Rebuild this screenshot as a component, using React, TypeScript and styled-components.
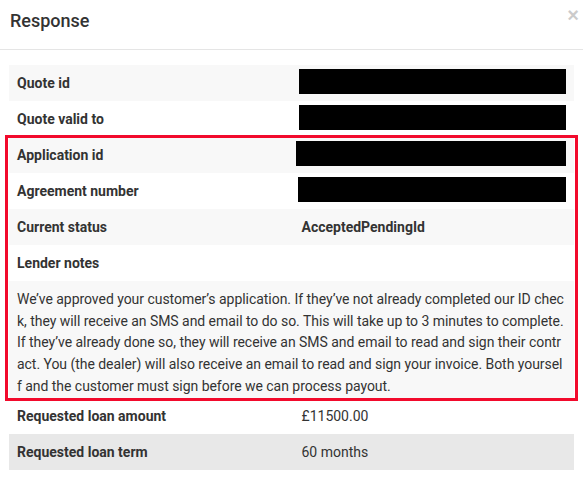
import React from 'react';
import styled, { createGlobalStyle } from 'styled-components';

const GlobalStyle = createGlobalStyle`
  html, body {
    margin: 0;
    padding: 0;
    background: #ffffff;
  }
  body {
    font-family: Roboto, "Liberation Sans", Arial, sans-serif;
    color: #333333;
    font-size: 14px;
  }
  * {
    box-sizing: border-box;
  }
`;

const Modal = styled.div`
  width: 583px;
  background: #ffffff;
`;

const Header = styled.div`
  display: flex;
  justify-content: space-between;
  align-items: flex-start;
  padding: 8px 4px 15px 10px;
  border-bottom: 1px solid #e5e5e5;
`;

const Title = styled.h4`
  margin: 0;
  font-size: 18px;
  line-height: 26px;
  font-weight: 500;
  color: #333333;
`;

const CloseButton = styled.button`
  border: 0;
  background: transparent;
  padding: 0;
  margin-top: -3px;
  font-family: "Liberation Sans", Arial, sans-serif;
  font-size: 20px;
  line-height: 1;
  font-weight: bold;
  color: #000000;
  opacity: 0.2;
  cursor: pointer;
`;

const Body = styled.div`
  padding: 15px 9px;
`;

const Table = styled.div`
  display: flex;
  flex-direction: column;
`;

const Row = styled.div<{ $bg?: string }>`
  display: grid;
  grid-template-columns: 1fr 1fr;
  background: ${({ $bg }) => $bg || '#ffffff'};
`;

const Label = styled.div`
  padding: 8px;
  font-weight: 700;
  line-height: 20px;
  color: #333333;
`;

const Value = styled.div<{ $bold?: boolean }>`
  padding: 8px 8px 8px 10px;
  line-height: 20px;
  font-weight: ${({ $bold }) => ($bold ? 700 : 400)};
  color: #333333;
`;

const Redacted = styled.span<{ $width: number; $shift?: number }>`
  display: block;
  height: 25px;
  width: ${({ $width }) => $width}px;
  margin: -4px 0 -1px ${({ $shift }) => $shift ?? -3}px;
  background: #000000;
`;

const Notes = styled.div`
  grid-column: 1 / span 2;
  padding: 8px 7px 0 8px;
  line-height: 21.7px;
  letter-spacing: -0.04px;
  word-break: break-all;
  color: #333333;
`;

const Highlight = styled.div`
  position: relative;

  &::after {
    content: "";
    position: absolute;
    top: -2px;
    bottom: -3px;
    left: -4px;
    right: -4px;
    border: 3px solid #f20a2c;
    pointer-events: none;
  }
`;

const STRIPE = '#f8f8f8';
const HOVER = '#e8e8e8';

const App = () => {
  return (
    <>
      <GlobalStyle />
      <Modal>
        <Header>
          <Title>Response</Title>
          <CloseButton aria-label="Close">×</CloseButton>
        </Header>
        <Body>
          <Table>
            <Row $bg={STRIPE}>
              <Label>Quote id</Label>
              <Value><Redacted $width={267} /></Value>
            </Row>
            <Row>
              <Label>Quote valid to</Label>
              <Value><Redacted $width={267} /></Value>
            </Row>
            <Highlight>
              <Row $bg={STRIPE}>
                <Label>Application id</Label>
                <Value><Redacted $width={270} $shift={-5} /></Value>
              </Row>
              <Row>
                <Label>Agreement number</Label>
                <Value><Redacted $width={268} /></Value>
              </Row>
              <Row $bg={STRIPE}>
                <Label>Current status</Label>
                <Value $bold>AcceptedPendingId</Value>
              </Row>
              <Row>
                <Label>Lender notes</Label>
              </Row>
              <Row $bg={STRIPE}>
                <Notes>
                  We’ve approved your customer’s application. If they’ve not already completed our ID check, they will receive an SMS and email to do so. This will take up to 3 minutes to complete. If they’ve already done so, they will receive an SMS and email to read and sign their contract. You (the dealer) will also receive an email to read and sign your invoice. Both yourself and the customer must sign before we can process payout.
                </Notes>
              </Row>
            </Highlight>
            <Row>
              <Label>Requested loan amount</Label>
              <Value>£11500.00</Value>
            </Row>
            <Row $bg={HOVER}>
              <Label>Requested loan term</Label>
              <Value>60 months</Value>
            </Row>
          </Table>
        </Body>
      </Modal>
    </>
  );
};

export default App;
